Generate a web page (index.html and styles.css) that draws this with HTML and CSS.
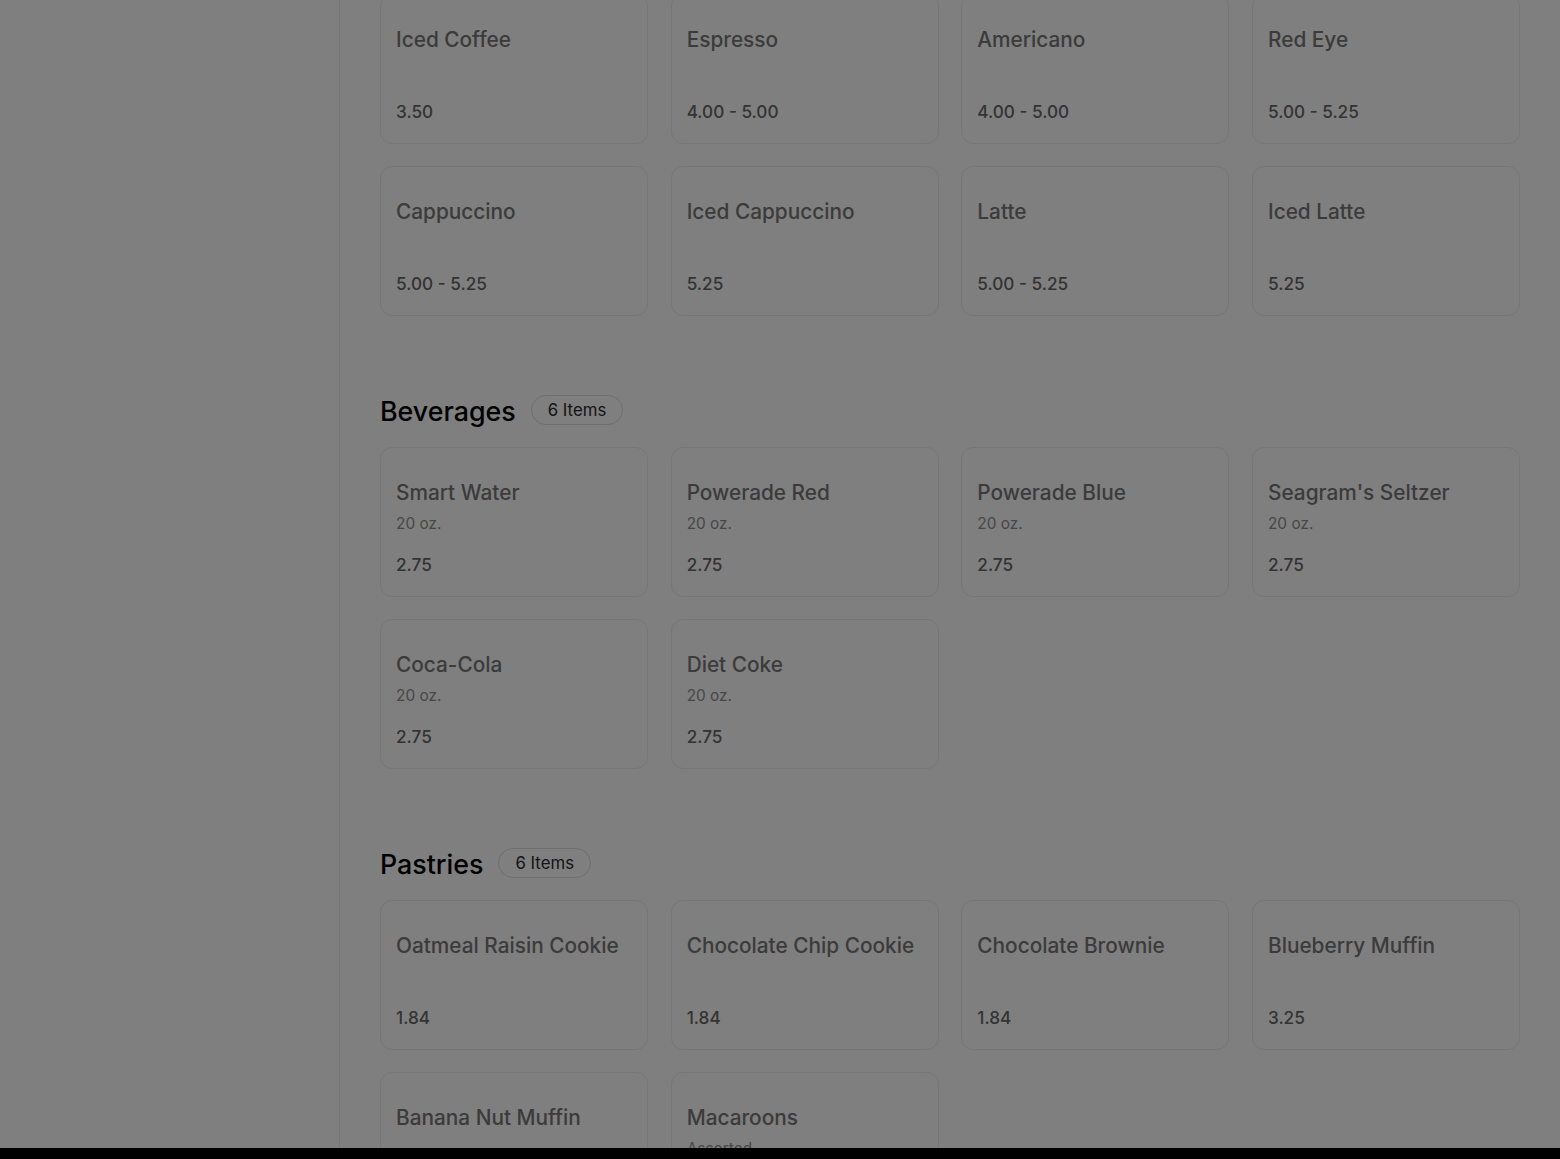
FILE: index.html
```html
<!DOCTYPE html>
<html lang="en">
<head>
<meta charset="utf-8">
<title>Menu</title>
<link rel="stylesheet" href="styles.css">
</head>
<body>
<div class="app">
  <aside class="sidebar"></aside>
  <main class="main">
    <section class="section section-first">
      <div class="grid">
        <div class="card"><div class="card-name">Iced Coffee</div><div class="card-price">3.50</div></div>
        <div class="card"><div class="card-name">Espresso</div><div class="card-price">4.00 - 5.00</div></div>
        <div class="card"><div class="card-name">Americano</div><div class="card-price">4.00 - 5.00</div></div>
        <div class="card"><div class="card-name">Red Eye</div><div class="card-price">5.00 - 5.25</div></div>
        <div class="card"><div class="card-name">Cappuccino</div><div class="card-price">5.00 - 5.25</div></div>
        <div class="card"><div class="card-name">Iced Cappuccino</div><div class="card-price">5.25</div></div>
        <div class="card"><div class="card-name">Latte</div><div class="card-price">5.00 - 5.25</div></div>
        <div class="card"><div class="card-name">Iced Latte</div><div class="card-price">5.25</div></div>
      </div>
    </section>

    <section class="section">
      <div class="section-head">
        <h2 class="section-title">Beverages</h2>
        <span class="badge">6 Items</span>
      </div>
      <div class="grid">
        <div class="card"><div class="card-name">Smart Water</div><div class="card-desc">20 oz.</div><div class="card-price">2.75</div></div>
        <div class="card"><div class="card-name">Powerade Red</div><div class="card-desc">20 oz.</div><div class="card-price">2.75</div></div>
        <div class="card"><div class="card-name">Powerade Blue</div><div class="card-desc">20 oz.</div><div class="card-price">2.75</div></div>
        <div class="card"><div class="card-name">Seagram's Seltzer</div><div class="card-desc">20 oz.</div><div class="card-price">2.75</div></div>
        <div class="card"><div class="card-name">Coca-Cola</div><div class="card-desc">20 oz.</div><div class="card-price">2.75</div></div>
        <div class="card"><div class="card-name">Diet Coke</div><div class="card-desc">20 oz.</div><div class="card-price">2.75</div></div>
      </div>
    </section>

    <section class="section">
      <div class="section-head">
        <h2 class="section-title">Pastries</h2>
        <span class="badge">6 Items</span>
      </div>
      <div class="grid">
        <div class="card"><div class="card-name">Oatmeal Raisin Cookie</div><div class="card-price">1.84</div></div>
        <div class="card"><div class="card-name">Chocolate Chip Cookie</div><div class="card-price">1.84</div></div>
        <div class="card"><div class="card-name">Chocolate Brownie</div><div class="card-price">1.84</div></div>
        <div class="card"><div class="card-name">Blueberry Muffin</div><div class="card-price">3.25</div></div>
        <div class="card"><div class="card-name">Banana Nut Muffin</div></div>
        <div class="card"><div class="card-name">Macaroons</div><div class="card-desc">Assorted</div></div>
      </div>
    </section>
  </main>
</div>
<div class="backdrop"></div>
<div class="bottom-bar"></div>
</body>
</html>
```
FILE: styles.css
```css
html, body {
  margin: 0;
  padding: 0;
  height: 100%;
  overflow: hidden;
}
body {
  background: #ffffff;
  font-family: Inter, "Open Sans", Arial, sans-serif;
  color: #222;
}
.app {
  display: flex;
  min-height: 100%;
}
.sidebar {
  width: 340px;
  flex: 0 0 340px;
  box-sizing: border-box;
  border-right: 1px solid #ececec;
  min-height: 1159px;
}
.main {
  flex: 1;
  padding: 0 40px;
}
.section-first {
  margin-top: -6.5px;
}
.section + .section {
  margin-top: 76.5px;
}
.section-head {
  display: flex;
  align-items: center;
  gap: 15px;
  height: 36px;
  margin-bottom: 18px;
}
.section-title {
  margin: 0;
  font-size: 26.8px;
  line-height: 36px;
  font-weight: 500;
  color: #000;
}
.badge {
  display: inline-flex;
  align-items: center;
  height: 30px;
  box-sizing: border-box;
  padding: 0 16px;
  border: 1px solid #dcdcdc;
  border-radius: 15px;
  font-size: 16.8px;
  font-weight: 400;
  color: #2a2a2a;
  margin-top: -1px;
}
.grid {
  display: grid;
  grid-template-columns: repeat(4, 1fr);
  column-gap: 22.67px;
  row-gap: 22.5px;
}
.card {
  height: 150px;
  box-sizing: border-box;
  border: 1px solid #ececec;
  border-radius: 12px;
  padding: 32px 15px 20px;
  display: flex;
  flex-direction: column;
}
.card-name {
  font-size: 20.8px;
  line-height: 26px;
  font-weight: 500;
  color: #767676;
  white-space: nowrap;
}
.card-desc {
  margin-top: 8px;
  font-size: 15.4px;
  line-height: 20px;
  font-weight: 400;
  color: #8e8e8e;
}
.card-price {
  margin-top: auto;
  font-size: 17.2px;
  line-height: 22px;
  font-weight: 500;
  color: #666;
}
.backdrop {
  position: fixed;
  inset: 0;
  background: rgba(0, 0, 0, 0.5);
}
.bottom-bar {
  position: fixed;
  left: 0;
  right: 0;
  bottom: 0;
  height: 11px;
  background: #000;
}
```
